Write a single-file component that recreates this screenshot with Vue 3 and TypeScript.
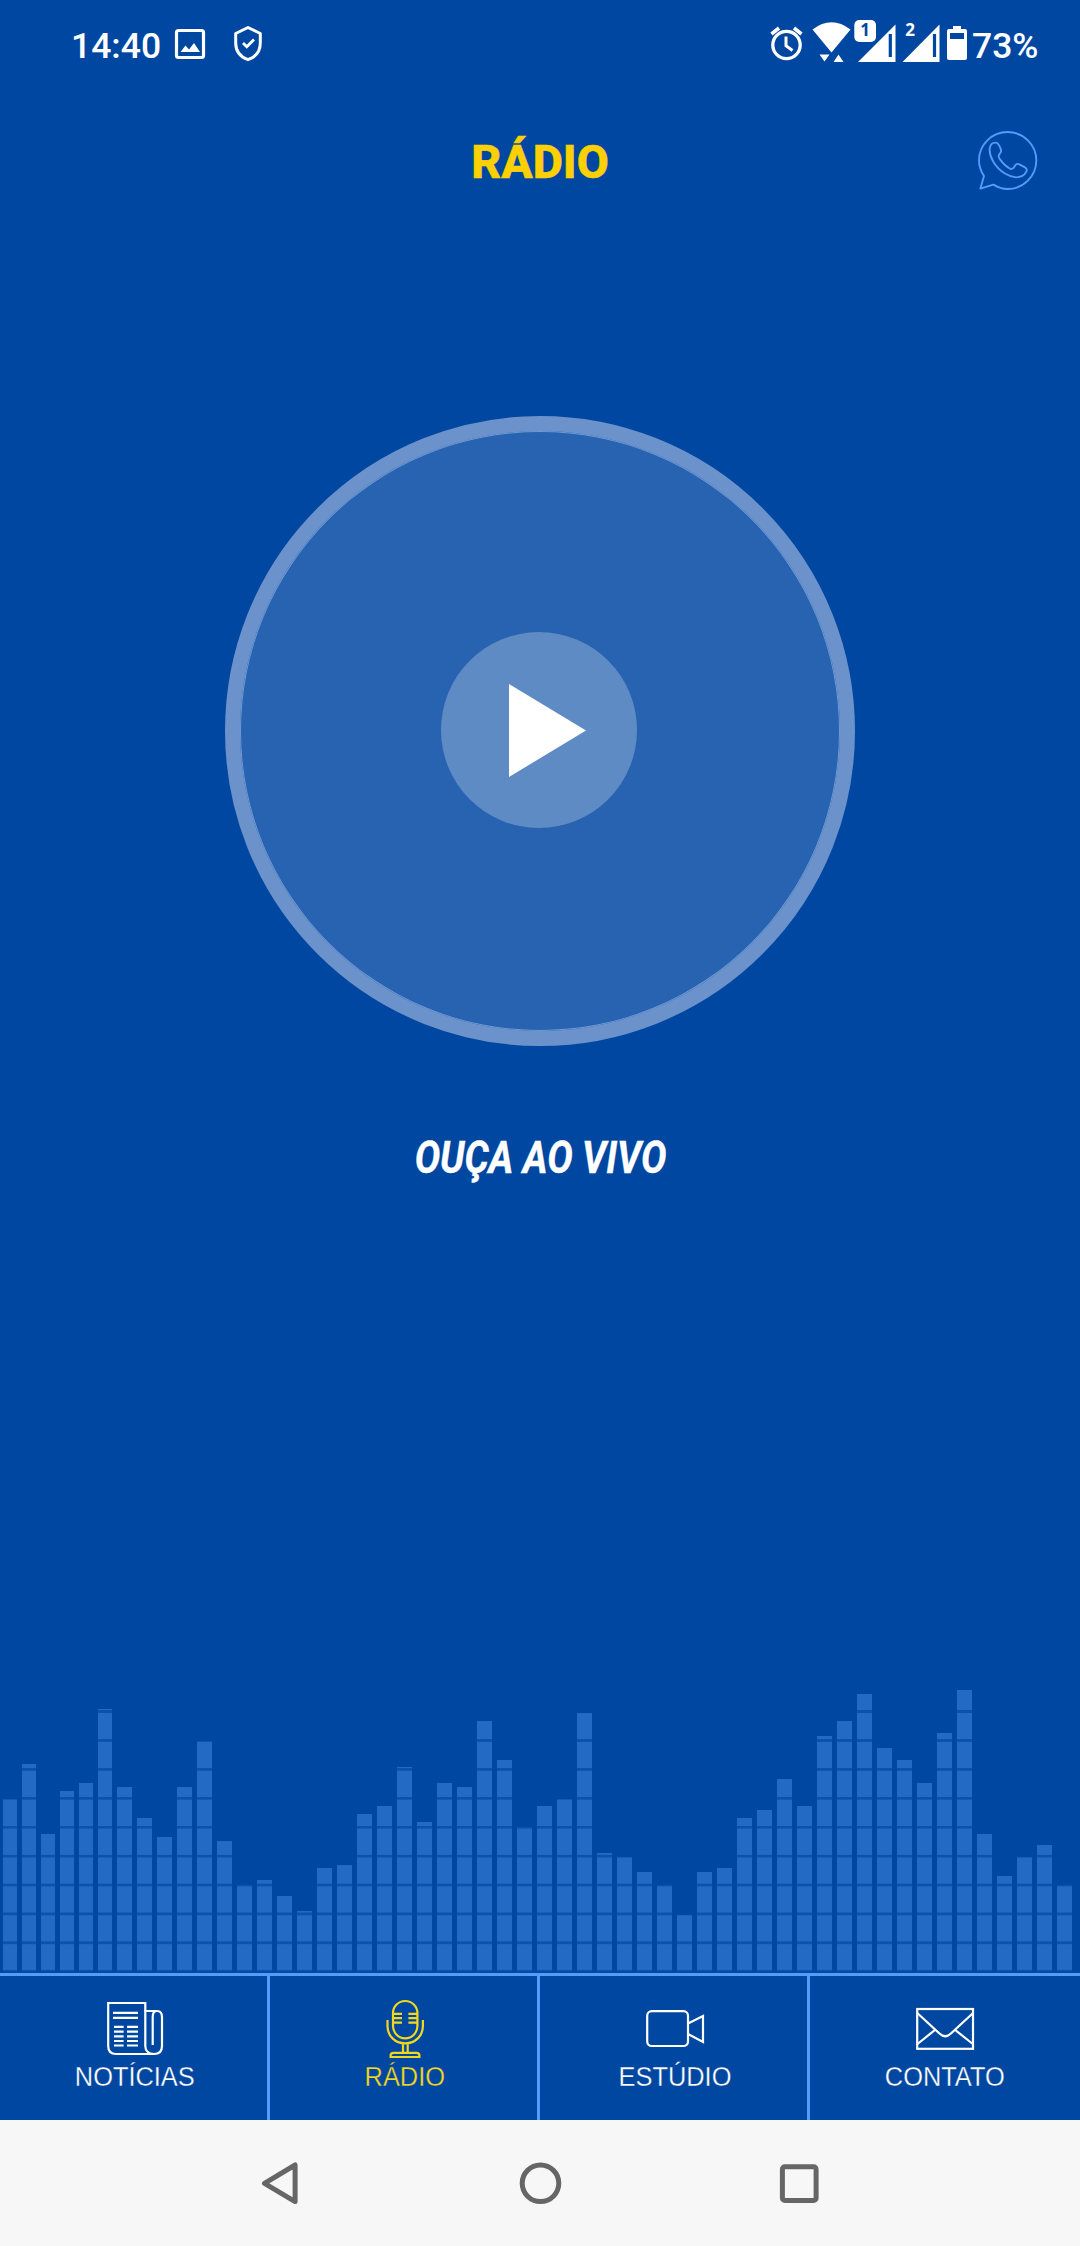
<script setup lang="ts">
interface Tab {
  id: 'news' | 'radio' | 'studio' | 'contact'
  label: string
}

const tabs: Tab[] = [
  { id: 'news', label: 'NOTÍCIAS' },
  { id: 'radio', label: 'RÁDIO' },
  { id: 'studio', label: 'ESTÚDIO' },
  { id: 'contact', label: 'CONTATO' },
]
const active: Tab['id'] = 'radio'

// Equalizer bar heights, left to right
const levels: number[] = [
  171, 206, 136, 179, 187, 261, 183, 152, 133, 183, 229, 129, 85, 90, 74, 59, 102, 105,
  156, 164, 203, 148, 187, 183, 249, 210, 143, 164, 171, 257, 117, 113, 98, 85, 55, 98,
  102, 152, 160, 191, 164, 234, 249, 276, 222, 210, 187, 237, 280, 136, 94, 113, 125, 85,
]
</script>

<template>
  <div class="screen">
    <div class="status">
      <div class="side">
        <span class="clock">14:40</span>
        <svg class="s-img" width="34" height="80" viewBox="173 0 34 80">
          <rect x="176.5" y="30.5" width="27" height="27" rx="2" fill="none" stroke="#fff" stroke-width="3.2" />
          <path d="M180.500 52 L185.500 45.500 L189 49.500 L194 43 L200 52Z" fill="#fff" />
        </svg>
        <svg class="s-shield" width="34" height="80" viewBox="231 0 34 80">
          <path d="M248 27.500 L260.300 33.500 V43 C260.300 51.500 255.500 57 248 59.700 C240.500 57 235.700 51.500 235.700 43 V33.500Z" fill="none" stroke="#fff" stroke-width="3" stroke-linejoin="round" />
          <path d="M243 43 L246.800 46.800 L254 39.500" fill="none" stroke="#fff" stroke-width="2.800" />
        </svg>
      </div>
      <div class="side">
        <svg width="36" height="80" viewBox="769 0 36 80" fill="none" stroke="#fff">
          <circle cx="786.500" cy="45" r="13.700" stroke-width="3.300" />
          <path d="M771.500 34 L779 28 M801.500 34 L794 28" stroke-width="3.600" />
          <path d="M786 36.500 V45.800 L792.500 50.500" stroke-width="3" />
        </svg>
        <svg width="48" height="80" viewBox="805 0 48 80" fill="#fff">
          <path d="M812.500 29.500 Q831.500 15 850.500 29.500 L831.500 52.500Z" />
          <path d="M819.500 54.500 H829.500 L824.500 61.500Z M833.500 62 H843.500 L838.500 54.500Z" />
        </svg>
        <svg width="46" height="80" viewBox="853 0 46 80">
          <path d="M858 62 L895.500 24.500 V62Z" fill="#fff" />
          <path d="M890.300 34 V57" stroke="#0047a1" stroke-width="3.200" />
          <rect x="853.500" y="19" width="23.500" height="24" rx="6" fill="#0047a1" />
          <rect x="854.300" y="20" width="21.700" height="22" rx="5" fill="#fff" />
          <text x="865.200" y="36.300" text-anchor="middle" class="sim dark">1</text>
        </svg>
        <svg width="44" height="80" viewBox="899 0 44 80">
          <path d="M902.500 62 L939.500 24.500 V62Z" fill="#fff" />
          <path d="M934.500 34 V57" stroke="#0047a1" stroke-width="3.200" />
          <text x="910" y="36.300" text-anchor="middle" class="sim">2</text>
        </svg>
        <svg width="28" height="80" viewBox="943 0 28 80">
          <path d="M953 26 H961 V29 H965 Q967 29 967 31 V58 Q967 60 965 60 H949 Q947 60 947 58 V31 Q947 29 949 29 H953Z" fill="#fff" />
          <path d="M950 33 H964 V39 H950Z" fill="#0047a1" />
        </svg>
        <span class="battery">73%</span>
      </div>
    </div>

    <header class="header">
      <h1>RÁDIO</h1>
      <svg class="whats" width="66" height="66" viewBox="75 51 198 198" fill="none" stroke="#559bf8" stroke-width="5.600" stroke-linejoin="round">
        <path d="M102 198 C91 182 87 168 87 151 C87 104 125 66 173 66 C220 66 259 104 259 151 C259 199 220 237 173 237 C157 237 143 232 130 224 L91 236Z" />
        <path d="M136 98 C144 97 147 104 151 114 C154 120 154 126 150 130 C144 137 145 140 150 148 C160 162 172 172 182 177 C188 179 190 176 194 169 C197 162 202 160 208 163 L225 172 C231 175 231 180 229 185 C223 197 212 202 198 202 C180 201 150 188 130 155 C122 142 118 128 119 115 C121 104 127 98 136 98Z" />
      </svg>
    </header>

    <main class="player">
      <div class="disc">
        <div class="knob">
          <svg width="77" height="93" viewBox="0 0 77 93"><path d="M0 0 L77 46.500 L0 93Z" fill="#fff" /></svg>
        </div>
      </div>
      <p class="live">OUÇA AO VIVO</p>
    </main>

    <div class="equalizer">
      <div v-for="(h, i) in levels" :key="i" class="bar" :class="{ narrow: i < 6 }" :style="{ height: h + 2 + 'px' }"></div>
    </div>

    <nav class="tabs">
      <div v-for="t in tabs" :key="t.id" class="tab" :class="{ active: t.id === active }">
        <svg width="64" height="62" viewBox="103 38 64 62" fill="none" stroke="currentColor" stroke-width="2.200">
          <g v-if="t.id === 'news'">
            <path d="M145.300 51 V43 H108.200 V86 C108.200 91 111 94 116 94 H154" />
            <path d="M145.300 51 H157 C160.500 51 162 53 162 57 V86 C162 91 159 94 154 94 C149 94 145.300 91 145.300 86Z M152.700 85 V57 C152.700 53 154 51 157 51" />
            <path d="M113 52.800 H138 M113 57.800 H138 M114 66.800 H123.600 M127 66.800 H138 M114 71.600 H123.600 M127 71.600 H138 M114 76.300 H123.600 M127 76.300 H138 M114 81 H123.600 M127 81 H138 M114 85.500 H123.600 M127 85.500 H138" />
          </g>
          <g v-else-if="t.id === 'radio'">
            <rect x="123" y="41" width="24.400" height="37.300" rx="12.200" />
            <path d="M123 53.800 H132 M138.400 53.800 H147 M123 58.200 H132 M138.400 58.200 H147 M123 62.700 H132 M138.400 62.700 H147" />
            <path d="M117.500 60 V66 C117.500 76 125 83.300 135.200 83.300 C145.400 83.300 152.900 76 152.900 66 V60 M133 83.300 V92.700 M137.700 83.300 V92.700" />
            <path d="M120.600 97 V95.500 Q120.600 92.800 123.500 92.800 H146.500 Q149.400 92.800 149.400 95.500 V97Z" />
          </g>
          <g v-else-if="t.id === 'studio'">
            <rect x="107.200" y="51.200" width="40.800" height="34.800" rx="4.500" />
            <path d="M148 63.500 L163 56 V82 L148 74" />
          </g>
          <g v-else>
            <rect x="107.200" y="49" width="55.800" height="39.800" />
            <path d="M107.500 53.300 L129.500 73.500 Q135.200 79 140.900 73.500 L162.800 53.300 M107.500 84 L125.500 69.500 M162.800 84 L144.600 69.500" />
          </g>
        </svg>
        <span class="label">{{ t.label }}</span>
      </div>
    </nav>

    <div class="system">
      <svg width="60" height="60" viewBox="249.500 2153 60 60"><path d="M264 2183.300 L294.600 2165 V2201.600Z" /></svg>
      <svg width="60" height="60" viewBox="510 2153 60 60"><circle cx="540.500" cy="2183.300" r="18.300" /></svg>
      <svg width="60" height="60" viewBox="770 2153 60 60"><rect x="782.400" y="2166.700" width="33.700" height="33.700" rx="2.500" /></svg>
    </div>
  </div>
</template>

<style>
body {
  margin: 0;
}
</style>

<style scoped>
.screen {
  width: 1080px;
  height: 2246px;
  display: flex;
  flex-direction: column;
  background: #0047a1;
  color: #fff;
  font-family: Roboto, sans-serif;
  overflow: hidden;
}
svg {
  display: block;
  flex: none;
}
.status {
  height: 80px;
  display: flex;
  justify-content: space-between;
  padding: 0 42px 0 71px;
}
.side {
  display: flex;
}
.clock,
.battery {
  font-size: 35.5px;
  font-weight: 500;
  line-height: 92px;
  height: 80px;
  white-space: nowrap;
}
.clock {
  width: 102px;
}
.battery {
  width: 66px;
  margin-left: 1px;
}
.s-shield {
  margin-left: 24px;
}
.sim {
  font: bold 17px 'Noto Sans', sans-serif;
  fill: #fff;
}
.sim.dark {
  fill: #0047a1;
}
.header {
  height: 160px;
  display: grid;
  grid-template-columns: 1fr auto 1fr;
  align-items: start;
}
h1 {
  grid-column: 2;
  margin: 52px 0 0;
  font-size: 46.5px;
  line-height: 60px;
  font-weight: 800;
  color: #fbd004;
  -webkit-text-stroke: 0.5px #fbd004;
}
.whats {
  justify-self: end;
  margin: 47px 39px 0 0;
}
.player {
  flex: 1;
  display: flex;
  flex-direction: column;
  align-items: center;
  padding-top: 176px;
}
.disc {
  width: 630px;
  height: 630px;
  box-sizing: border-box;
  border: 15px solid #6b92ca;
  border-radius: 50%;
  background: #2863b1;
  box-shadow: inset 0 0 0 1px #6f9ad6;
  display: flex;
  align-items: center;
  justify-content: center;
}
.knob {
  width: 196px;
  height: 196px;
  margin: 0 2px 2px 0;
  border-radius: 50%;
  background: #5f8bc5;
  display: flex;
  align-items: center;
  justify-content: center;
}
.knob svg {
  margin-left: 16px;
  margin-top: 1px;
}
.live {
  margin: 82px 0 0;
  font-size: 44px;
  line-height: 60px;
  font-weight: 700;
  font-style: italic;
  white-space: nowrap;
  transform: scaleX(0.865);
  -webkit-text-stroke: 0.4px #fff;
}
.equalizer {
  height: 303px;
  display: flex;
  align-items: flex-end;
  gap: 5px;
  padding: 0 0 1px 3px;
  box-sizing: border-box;
}
.bar {
  width: 15px;
  flex: none;
  box-sizing: border-box;
  border-bottom: 2px solid #0650a9;
  background: repeating-linear-gradient(to top, #236ac4 0 25.3px, #0a53ad 26.3px 28.3px, #236ac4 28.9px) padding-box;
}
.bar.narrow {
  width: 14px;
}
.tabs {
  display: flex;
  height: 147px;
  box-sizing: border-box;
  border-top: 3px solid #559bf8;
}
.tab {
  width: 270px;
  box-sizing: border-box;
  display: flex;
  flex-direction: column;
  align-items: center;
  padding: 22px 0 0 3px;
  border-right: 3px solid #559bf8;
}
.tab:last-child {
  border-right: 0;
  padding-left: 0;
}
.active {
  color: #f2d81c;
}
.label {
  font: 27px/34px 'Liberation Sans', Arial, sans-serif;
  white-space: nowrap;
  transform: scaleX(0.94);
  -webkit-text-stroke: 0.3px #0047a1;
}
.system {
  height: 126px;
  display: flex;
  align-items: center;
  justify-content: center;
  gap: 200px;
  background: #f7f7f7;
}
.system svg {
  fill: none;
  stroke: #666;
  stroke-width: 5;
  stroke-linejoin: round;
}
</style>
